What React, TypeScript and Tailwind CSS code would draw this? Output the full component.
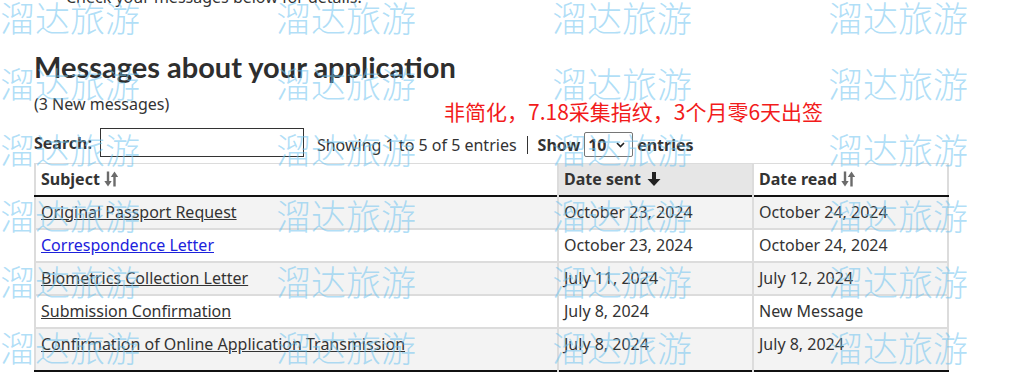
import React from "react";

interface Message {
  subject: string;
  sent: string;
  read: string;
  isNew?: boolean;
}

const messages: Message[] = [
  { subject: "Original Passport Request", sent: "October 23, 2024", read: "October 24, 2024" },
  { subject: "Correspondence Letter", sent: "October 23, 2024", read: "October 24, 2024", isNew: true },
  { subject: "Biometrics Collection Letter", sent: "July 11, 2024", read: "July 12, 2024" },
  { subject: "Submission Confirmation", sent: "July 8, 2024", read: "New Message" },
  { subject: "Confirmation of Online Application Transmission", sent: "July 8, 2024", read: "July 8, 2024" },
];

const SortBoth = () => (
  <svg width="14" height="18" viewBox="0 0 14 17" className="ml-[4px] inline-block">
    <rect x="2.8" y="1" width="2.4" height="11" fill="#6b6b6b" />
    <polygon points="0.3,10.5 7.7,10.5 4,16" fill="#6b6b6b" />
    <rect x="9.3" y="5" width="2.4" height="11" fill="#6b6b6b" />
    <polygon points="6.8,6.5 14.2,6.5 10.5,1" fill="#6b6b6b" />
  </svg>
);

const SortDown = () => (
  <svg width="14" height="16" viewBox="0 0 14 16" className="ml-[6px] inline-block">
    <rect x="5" y="1" width="4" height="8" fill="#222" />
    <polygon points="0.5,8 13.5,8 7,15" fill="#222" />
  </svg>
);

// watermark rows / columns
const wmRows = [0, 1, 2, 3, 4, 5];
const wmCols = [0, 1, 2, 3];

export default function App() {
  return (
    <div className="relative w-[1019px] h-[387px] overflow-hidden bg-white text-[#333] font-['Noto_Sans',sans-serif] text-[16px]">
      <div className="pl-[34px]">
        <p className="-mt-[14px] pl-[32px] leading-[22px]">Check your messages below for details.</p>

        <h1 className="mt-[41px] font-['Lato',sans-serif] text-[29px] leading-[35px] font-bold text-[#2e2e2e]">
          Messages about your application
        </h1>

        <div className="mt-[9px] flex items-start">
          <span className="w-[410px] leading-[22px]">(3 New messages)</span>
          <span className="mt-[8px] font-['Noto_Sans_CJK_SC',sans-serif] text-[21px] leading-[21px] text-[#f21b1b]">
            非简化，7.18采集指纹，3个月零6天出签
          </span>
        </div>

        <div className="mt-[6px] flex items-end">
          <div className="flex items-center">
            <label className="font-bold leading-[22px]">Search:</label>
            <input className="ml-[8px] w-[204px] h-[29px] border border-[#333] bg-transparent px-1 outline-none" />
          </div>
          <div className="ml-[13px] flex items-center">
            <span className="leading-[22px]">Showing 1 to 5 of 5 entries</span>
            <span className="mx-[10px] w-px h-[18px] bg-[#333]" />
            <span className="font-bold leading-[22px]">Show</span>
            <div className="relative ml-[4px]">
              <select className="appearance-none w-[49px] h-[25px] border border-[#767676] rounded-[2px] bg-transparent pl-[3px] font-bold leading-5 outline-none">
                <option>10</option>
              </select>
              <svg width="9" height="6" viewBox="0 0 9 6" className="pointer-events-none absolute right-[8px] top-[10px]">
                <path d="M1 1 L4.5 4.5 L8 1" fill="none" stroke="#222" strokeWidth="1.6" />
              </svg>
            </div>
            <span className="ml-[4px] font-bold leading-[22px]">entries</span>
          </div>
        </div>

        <table className="mt-[6px] w-[913px] border-collapse border-x-2 border-[#dcdcdc] table-fixed">
          <colgroup>
            <col className="w-[523px]" />
            <col className="w-[195px]" />
            <col className="w-[195px]" />
          </colgroup>
          <thead>
            <tr className="h-[32px] border-t border-[#dcdcdc] border-b-2 border-b-[#111]">
              <th className="text-left font-bold pl-[5px] align-middle">
                <span className="inline-flex items-center">
                  Subject
                  <SortBoth />
                </span>
              </th>
              <th className="text-left font-bold pl-[5px] bg-[#e6e6e6] border-x-2 border-[#dcdcdc] align-middle">
                <span className="inline-flex items-center">
                  Date sent
                  <SortDown />
                </span>
              </th>
              <th className="text-left font-bold pl-[5px] align-middle">
                <span className="inline-flex items-center">
                  Date read
                  <SortBoth />
                </span>
              </th>
            </tr>
          </thead>
          <tbody>
            {messages.map((m, i) => {
              const last = i === messages.length - 1;
              return (
                <tr
                  key={m.subject}
                  className={`${i % 2 === 0 ? "bg-[#f3f3f3]" : "bg-white"} ${
                    last ? "h-[43px] border-b-2 border-b-[#111]" : "h-[33px] border-b-2 border-b-[#dcdcdc]"
                  }`}
                >
                  <td className="pl-[5px] pt-[4px] align-top leading-[22px]">
                    <a
                      href="#"
                      className={`underline ${m.isNew ? "text-[#1c22dc]" : "text-[#333]"}`}
                    >
                      {m.subject}
                    </a>
                  </td>
                  <td className="pl-[5px] pt-[4px] align-top leading-[22px] border-x-2 border-[#dcdcdc]">{m.sent}</td>
                  <td className="pl-[5px] pt-[4px] align-top leading-[22px]">{m.read}</td>
                </tr>
              );
            })}
          </tbody>
        </table>
      </div>

      {/* watermark */}
      <div className="pointer-events-none absolute left-0 -top-px">
        {wmRows.map((r) => (
          <div key={r} className="flex h-[66px]">
            {wmCols.map((c) => (
              <span
                key={c}
                className="w-[276px] font-['Noto_Sans_CJK_SC',sans-serif] font-light text-[35px] leading-[35px] text-[rgba(110,195,240,0.55)]"
              >
                溜达旅游
              </span>
            ))}
          </div>
        ))}
      </div>
    </div>
  );
}
